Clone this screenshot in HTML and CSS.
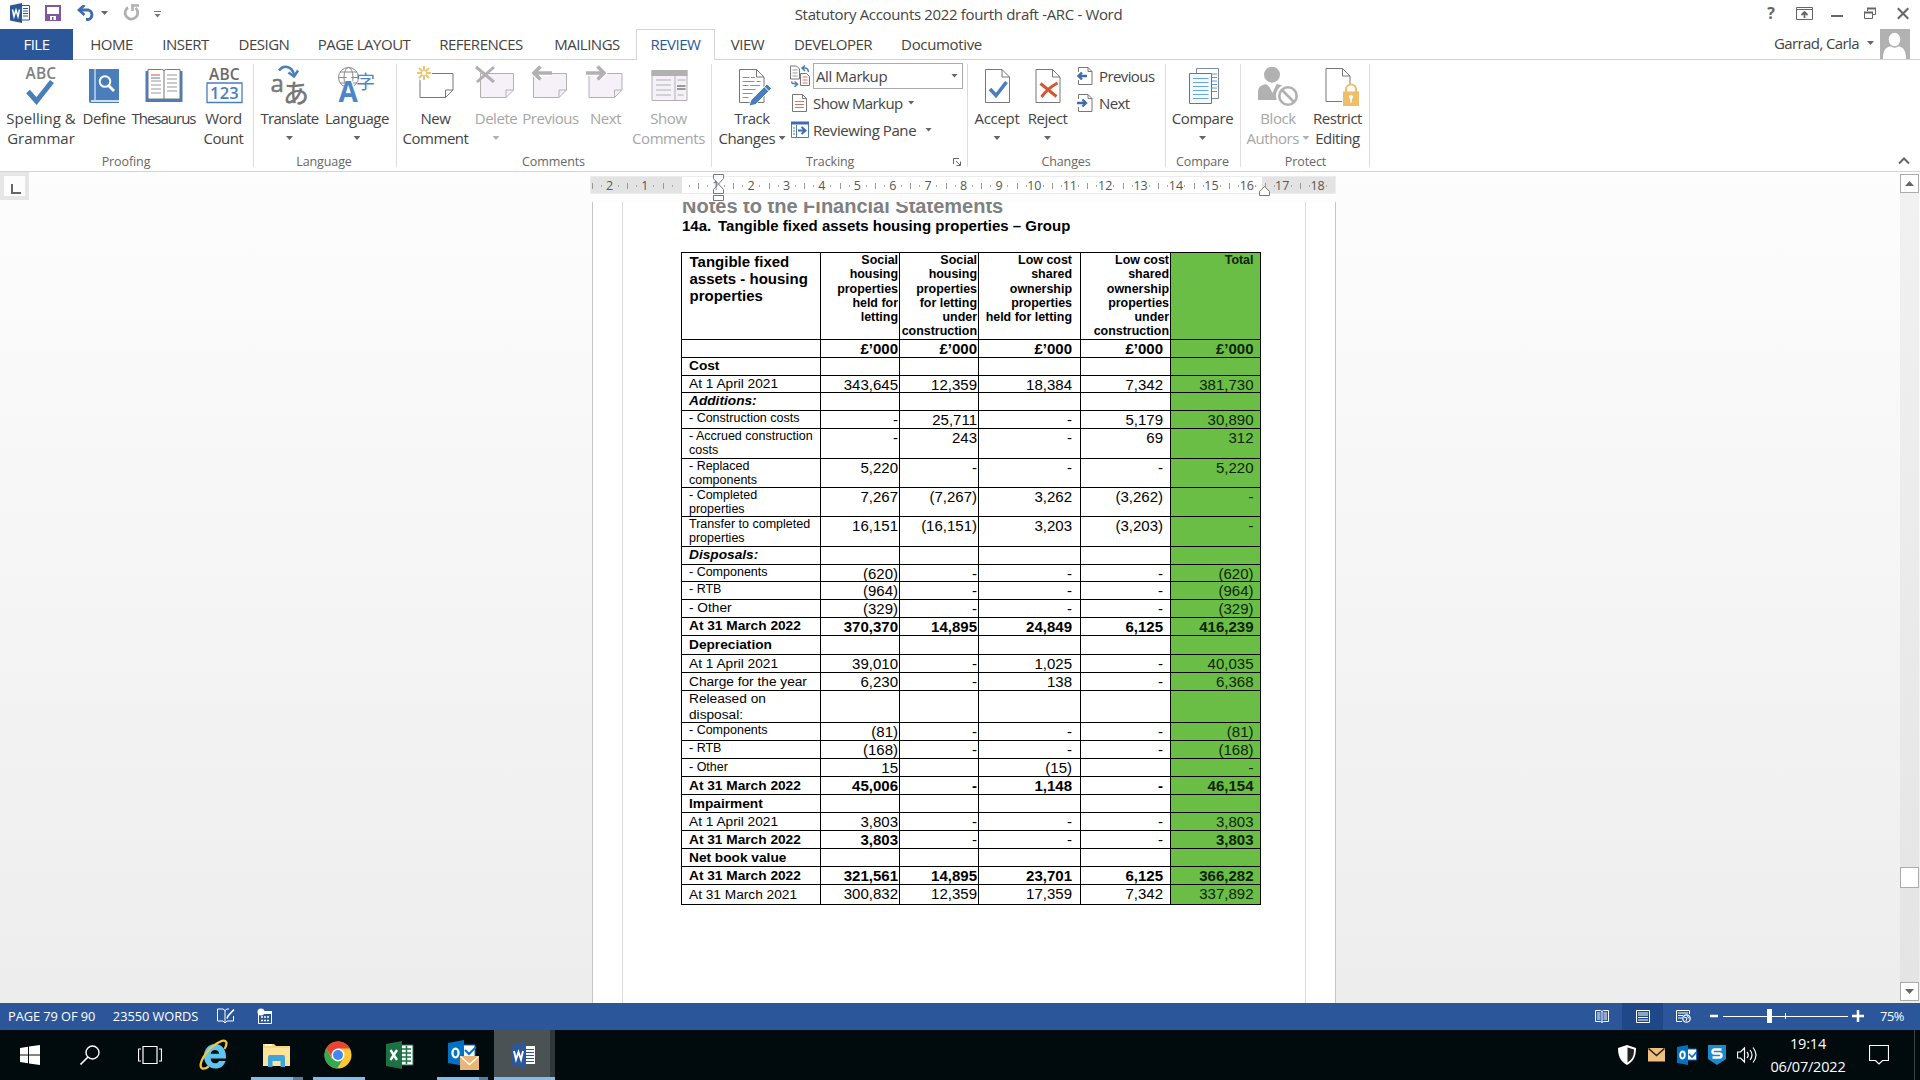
FILE: index.html
```html
<!DOCTYPE html>
<html lang="en">
<head>
<meta charset="utf-8">
<title>Statutory Accounts 2022 fourth draft -ARC - Word</title>
<link rel="stylesheet" href="styles.css">
</head>
<body>
<div class="app">
  <header class="titlebar">
    <div class="quick">
      <svg class="q-word" width="20" height="20" viewBox="0 0 20 20"><path d="M10 2.500h9.500v14.500H10" fill="#fff" stroke="#2b579a"/><path d="M13 5.500h5M13 8h5M13 10.500h5M13 13h5" stroke="#2b579a"/><path d="M0 2.500L12 0v20L0 17.500z" fill="#2b579a"/><path d="M2.500 6.500l1.500 7 2-6.500 2 6.500 1.500-7" fill="none" stroke="#fff" stroke-width="1.500"/></svg>
      <svg class="q-save" width="16" height="16" viewBox="0 0 16 16"><path d="M1 1h14v14H1z" fill="#fff" stroke="#8356a0" stroke-width="2"/><path d="M2 9h12v6H2z" fill="#8356a0"/><path d="M5 11h6v4H8.500v-3H7v3H5z" fill="#fff"/></svg>
      <svg class="q-undo" width="19" height="16" viewBox="0 0 19 16"><path d="M2 5h9.500a5 5 0 0 1 0 9.500H9" fill="none" stroke="#3f6cae" stroke-width="2.800"/><path d="M7.500 0L2 5l5.500 5" fill="none" stroke="#3f6cae" stroke-width="2.800"/></svg>
      <i class="caret q-caret"></i>
      <svg class="q-redo" width="17" height="17" viewBox="0 0 17 17"><path d="M5 3.500A6.300 6.300 0 1 0 12.500 4" fill="none" stroke="#b1b1b1" stroke-width="2.800"/><path d="M9.500 0v7M9.500 1.500H16" stroke="#b1b1b1" stroke-width="2.600" fill="none"/></svg>
      <svg class="q-more" width="7" height="7" viewBox="0 0 7 7"><path d="M0 .5h7" stroke="#777"/><path d="M.5 3h6l-3 3.500z" fill="#777"/></svg>
    </div>
    <div class="title">Statutory Accounts 2022 fourth draft -ARC - Word</div>
    <div class="winctl">
      <b class="help">?</b>
      <svg class="opts" width="17" height="13" viewBox="0 0 17 13"><path d="M.5.500h16v12H.5zM.5 2.500h16" fill="none" stroke="#666"/><path d="M8.500 11V5M5.500 8l3-3 3 3" fill="none" stroke="#666" stroke-width="1.800"/></svg>
      <svg width="12" height="13" viewBox="0 0 12 13"><path d="M0 9h12" stroke="#666" stroke-width="2"/></svg>
      <svg width="12" height="13" viewBox="0 0 12 13"><path d="M3.500 4V1.500h8v6H9" fill="none" stroke="#666"/><path d="M3 1.500h9" stroke="#666" stroke-width="2"/><path d="M.5 5.500h8v6h-8z" fill="#fff" stroke="#666"/><path d="M0 5.500h9" stroke="#666" stroke-width="2"/></svg>
      <svg width="12" height="13" viewBox="0 0 12 13"><path d="M.8 1.200l10.500 10.600M11.300 1.200L.8 11.800" stroke="#666" stroke-width="2"/></svg>
    </div>
  </header>

  <nav class="tabs">
    <a class="tab file">FILE</a><a class="tab home">HOME</a><a class="tab insert">INSERT</a><a class="tab design">DESIGN</a><a class="tab layout">PAGE LAYOUT</a><a class="tab refs">REFERENCES</a><a class="tab mail">MAILINGS</a><a class="tab review">REVIEW</a><a class="tab view">VIEW</a><a class="tab dev">DEVELOPER</a><a class="tab docu">Documotive</a>
    <div class="user"><span class="username">Garrad, Carla</span><i class="caret"></i>
      <svg width="30" height="30" viewBox="0 0 30 30"><path d="M0 0h30v30H0z" fill="#b1b1b1"/><ellipse cx="14.500" cy="10.500" rx="5.800" ry="6.800" fill="#fff"/><path d="M3 30c0-8 2-12 8-12.500q3.500 2.500 7 0c6 .5 8 4.500 8 12.500z" fill="#fff"/></svg>
    </div>
  </nav>

  <section class="ribbon">
    <div class="group g-proofing">
      <div class="tools">
        <div class="btn w78 wide"><svg class="ico" viewBox="0 0 44 44"><text x="6.500" y="16" class="abc">ABC</text><path d="M9 28.500l8.500 9.500L33 18.500" fill="none" stroke="#4a7ebb" stroke-width="5"/></svg><span>Spelling &amp;<br>Grammar</span></div>
        <div class="btn w48"><svg class="ico" viewBox="0 0 44 44"><path d="M7 6h30v34H9a2 2 0 0 1-2-2z" fill="#4a7ebb"/><path d="M13 6v31" stroke="#fff"/><path d="M9 38h28" stroke="#fff" stroke-width="1.500"/><circle cx="23" cy="18.500" r="5.300" fill="none" stroke="#fff" stroke-width="2"/><path d="M26.500 22.500l5.500 5.500" stroke="#fff" stroke-width="2.800"/></svg><span>Define</span></div>
        <div class="btn w71 tightest"><svg class="ico" viewBox="0 0 44 44"><path d="M3.500 8h37v31h-37z" fill="#4a7ebb"/><path d="M6 6.500h13.500q2.500 0 2.500 1.500 0-1.500 2.500-1.500H38v29.500H6z" fill="#fff" stroke="#777"/><path d="M22 8v30" stroke="#777"/><path d="M9 18h10M9 22h10M9 26h10M9 30h10M25 12h10M25 16h10M25 20h10M25 24h10M25 28h10" stroke="#999"/><path d="M9 12h9" stroke="#d35230"/><path d="M9 15h9" stroke="#4a7ebb"/></svg><span>Thesaurus</span></div>
        <div class="btn w49"><svg class="ico" viewBox="0 0 44 44"><text x="7" y="17" class="abc dark">ABC</text><path d="M5 20h35v19.500H5z" fill="#fff" stroke="#4a7ebb" stroke-width="1.300"/><text x="8" y="36" class="n123">123</text></svg><span>Word<br>Count</span></div>
      </div>
      <div class="gname">Proofing</div>
    </div>
    <div class="group g-language">
      <div class="tools">
        <div class="btn w69 tight"><svg class="ico" viewBox="0 0 44 44"><text x="2.500" y="28.500" class="t-a">a</text><text x="15" y="40" class="t-ja">あ</text><path d="M11 7.500C15 2 24 2 26 12" fill="none" stroke="#4a7ebb" stroke-width="2.600"/><path d="M20.500 9.500l5.500 4 4-6" fill="none" stroke="#4a7ebb" stroke-width="2.600"/></svg><span>Translate<br><i class="caret"></i></span></div>
        <div class="btn w66"><svg class="ico" viewBox="0 0 44 44"><g fill="none" stroke="#888"><circle cx="13.500" cy="14.500" r="10"/><ellipse cx="13.500" cy="14.500" rx="4.500" ry="10"/><path d="M3.500 14.500h20M5 9h17M5 20h17"/></g><path d="M3 39l9-25h4l9 25z" fill="#fff"/><text x="3.500" y="39" class="l-a">A</text><text x="21" y="26" class="l-zi">字</text></svg><span>Language<br><i class="caret"></i></span></div>
      </div>
      <div class="gname">Language</div>
    </div>
    <div class="group g-comments">
      <div class="tools">
        <div class="btn w73"><svg class="ico" viewBox="0 0 44 44"><path d="M6 10.500h33v16.500l-7.500 7.500H6zM31.500 34.500V27H39" fill="#fff" stroke="#777"/><circle cx="10" cy="10" r="8" fill="#fff"/><path d="M10 3v14M3 10h14M5 5l10 10M15 5L5 15" stroke="#eec56f" stroke-width="2"/><circle cx="10" cy="10" r="2.600" fill="#fff" stroke="#eec56f"/></svg><span>New<br>Comment</span></div>
        <div class="btn w48 off"><svg class="ico" viewBox="0 0 44 44"><path d="M6.500 10.500h33v16.500L32 34.500H6.500zM32 34.500V27h7.500" fill="#f6f1f8" stroke="#b1b1b1"/><path d="M2 4l18 15M20 4L3 19" stroke="#b1b1b1" stroke-width="3"/></svg><span>Delete<br><i class="caret"></i></span></div>
        <div class="btn w61 off"><svg class="ico" viewBox="0 0 44 44"><path d="M4.500 10.500h33v16.500L30 34.500H4.500zM30 34.500V27h7.500" fill="#f6f1f8" stroke="#b1b1b1"/><path d="M5 10h17M11.500 3.500L5 10l6.500 6.500" fill="none" stroke="#fff" stroke-width="6"/><path d="M4 10h19M11.500 3.500L5 10l6.500 6.500" fill="none" stroke="#b1b1b1" stroke-width="3.600"/></svg><span>Previous</span></div>
        <div class="btn w49 off"><svg class="ico" viewBox="0 0 44 44"><path d="M5 10.500h33v16.500l-7.500 7.500H5zM30.500 34.500V27H38" fill="#f6f1f8" stroke="#b1b1b1"/><path d="M2 10h17M13 3.500l6.500 6.500-6.500 6.500" fill="none" stroke="#fff" stroke-width="6"/><path d="M2 10h19M13.500 3.500L20 10l-6.500 6.500" fill="none" stroke="#b1b1b1" stroke-width="3.600"/></svg><span>Next</span></div>
        <div class="btn w77 off"><svg class="ico" viewBox="0 0 44 44"><path d="M5 7.500h35v30H5z" fill="#f6f1f8" stroke="#b1b1b1"/><path d="M4.500 10h36" stroke="#b1b1b1" stroke-width="6"/><path d="M28 12v26" stroke="#b1b1b1"/><path d="M9 17h15M9 22h15M9 27h15M9 32h15M30.500 17h8M30.500 32h6" stroke="#b1b1b1"/><path d="M30 23h8.500M30 26h8.500" stroke="#999" stroke-width="2"/></svg><span>Show<br>Comments</span></div>
      </div>
      <div class="gname">Comments</div>
    </div>
    <div class="group g-tracking">
      <div class="tools">
        <div class="btn w76"><svg class="ico" viewBox="0 0 44 44"><path d="M9.500 6.500h17l7.500 7.500v25.500H9.500z" fill="#fff" stroke="#777"/><path d="M26.500 6.500V14H34" fill="none" stroke="#777"/><path d="M12.500 14.500h7M21 14.500h4M12.500 18.500h12M26.500 18.500h4M12.500 22.500h6M20 22.500h10M12.500 26.500h13M12.500 30.500h10M12.500 34.500h6" stroke="#d9735a"/><path d="M19 43l2-6 16-16 4.500 4.500-16 16z" fill="#4a7ebb" stroke="#fff" stroke-width=".8"/><path d="M34 23.500l5 5" stroke="#fff"/></svg><span>Track<br>Changes&nbsp;<i class="caret up"></i></span></div>
        <div class="list l-track">
          <div class="row"><svg width="21" height="22" viewBox="0 0 21 22"><path d="M.5 1h6l3 3v10h-9z" fill="#fff" stroke="#777"/><path d="M2.500 5h5M2.500 8h5M2.500 11h5" stroke="#999"/><path d="M10.500 8.500h6l3 3v9h-9z" fill="#fff" stroke="#777"/><path d="M12.500 12h5M12.500 15h5M12.500 18h5" stroke="#d9735a"/><path d="M12 3h3q3 0 3.500 4M15 .5L12 3l3 3M1.500 16.500q0 2.500 5 2.500M4.500 16.500l3 2.500-3 3" fill="none" stroke="#4a7ebb" stroke-width="1.500"/></svg><div class="combo">All Markup<i class="caret"></i></div></div>
          <div class="row"><svg width="21" height="20" viewBox="0 0 21 20"><path d="M2.500 1.500h10l4 4v13h-14z" fill="#fff" stroke="#777"/><path d="M12.500 1.500v4h4" fill="none" stroke="#777"/><path d="M5 8.500h9M5 11.500h9M5 14.500h9" stroke="#d9735a"/></svg><span>Show Markup</span><i class="caret"></i></div>
          <div class="row"><svg width="21" height="20" viewBox="0 0 21 20"><path d="M1.500 2.500h17v15h-17z" fill="#fff" stroke="#4a7ebb"/><path d="M1 3h18" stroke="#3f6cae" stroke-width="3"/><path d="M6.500 5v12M3 8h2M3 11h2M3 14h2" stroke="#4a7ebb"/><path d="M8 10.500h7M11.500 7l4 3.500-4 3.500" fill="none" stroke="#3f6cae" stroke-width="2"/></svg><span class="rp">Reviewing Pane</span><i class="caret far"></i></div>
        </div>
      </div>
      <div class="gname">Tracking<svg class="launcher" width="8" height="8" viewBox="0 0 8 8"><path d="M.5 6V.500H6M3 3l4 4M7.500 3.500v4h-4" fill="none" stroke="#666"/></svg></div>
    </div>
    <div class="group g-changes">
      <div class="tools">
        <div class="btn w54 easy"><svg class="ico" viewBox="0 0 44 44"><path d="M10.500 6.500h16.500l7.500 7.500v25.500h-24z" fill="#fff" stroke="#777"/><path d="M27 6.500V14h7.500" fill="none" stroke="#777"/><path d="M15 26l6 6.500L31.500 19" fill="none" stroke="#4a7ebb" stroke-width="3.600"/></svg><span>Accept<br><i class="caret"></i></span></div>
        <div class="btn w47"><svg class="ico" viewBox="0 0 44 44"><path d="M10 6.500h16.500L34 14v25.500H10z" fill="#fff" stroke="#777"/><path d="M26.500 6.500V14H34" fill="none" stroke="#777"/><path d="M14.500 20.500l16 13M31.500 20Q22 25 15.500 34" fill="none" stroke="#d65532" stroke-width="3"/></svg><span>Reject<br><i class="caret"></i></span></div>
        <div class="list l-chg">
          <div class="row"><svg width="18" height="20" viewBox="0 0 18 20"><path d="M1.500 6V1.500h9.500l4 4v13H1.500V14" fill="#fff" stroke="#777"/><path d="M11 1.500v4h4" fill="none" stroke="#777"/><path d="M1 10h9M5 6.500L1.500 10 5 13.500" fill="none" stroke="#3f6cae" stroke-width="2.300"/></svg><span>Previous</span></div>
          <div class="row"><svg width="18" height="20" viewBox="0 0 18 20"><path d="M1.500 6V1.500h9.500l4 4v13H1.500V14" fill="#fff" stroke="#777"/><path d="M11 1.500v4h4" fill="none" stroke="#777"/><path d="M0 10h9M5.500 6.500L9 10l-3.500 3.500" fill="none" stroke="#3f6cae" stroke-width="2.300"/></svg><span>Next</span></div>
        </div>
      </div>
      <div class="gname">Changes</div>
    </div>
    <div class="group g-compare">
      <div class="tools">
        <div class="btn w69"><svg class="ico" viewBox="0 0 44 44"><path d="M15.500 5.500h22v30h-22z" fill="#fff" stroke="#7a8da8"/><path d="M31 11h5M31 14.500h5M31 18h5M31 21.500h5M31 25h5M31 28.500h5" stroke="#5b9bd5"/><path d="M8.500 10.500H30.500v30h-22z" fill="#f3f9fd" stroke="#57799f"/><path d="M12 15.500h15.500M12 19.500h15.500M12 23.500h15.500M12 27.500h15.500M12 31.500h15.500M12 35.500h15.500" stroke="#6aa5d8"/></svg><span>Compare<br><i class="caret"></i></span></div>
      </div>
      <div class="gname">Compare</div>
    </div>
    <div class="group g-protect">
      <div class="tools">
        <div class="btn w66 off"><svg class="ico" viewBox="0 0 44 44"><circle cx="16" cy="11.700" r="8" fill="#b1b1b1"/><path d="M2 37V29q0-7 8-8l6 5 5-5q6 1 8 4v12z" fill="#b1b1b1"/><path d="M12 21l4.500 9 4-9z" fill="#fff"/><circle cx="32" cy="33" r="12" fill="#fff"/><circle cx="32" cy="33" r="8.700" fill="#fff" stroke="#b1b1b1" stroke-width="2.600"/><path d="M26 27l12 12" stroke="#b1b1b1" stroke-width="2.600"/></svg><span>Block<br>Authors&nbsp;<i class="caret up"></i></span></div>
        <div class="btn w53"><svg class="ico" viewBox="0 0 44 44"><path d="M10 5.500h16.500L34 13v25.500H10z" fill="#fff" stroke="#777"/><path d="M26.500 5.500V13H34" fill="none" stroke="#777"/><path d="M26 44V26l4-4h9l4 4v18z" fill="#fff"/><path d="M30 29v-2.500a5 5 0 0 1 10 0V29" fill="none" stroke="#eebf6b" stroke-width="2.200"/><path d="M27 28.500h16V43H27z" fill="#eebf6b"/><circle cx="35" cy="34" r="2" fill="#fff"/><path d="M35 34v5.500" stroke="#fff" stroke-width="1.600"/></svg><span>Restrict<br>Editing</span></div>
      </div>
      <div class="gname">Protect</div>
    </div>
    <svg class="collapse" width="12" height="8" viewBox="0 0 12 8"><path d="M1 6.500l5-5 5 5" fill="none" stroke="#666" stroke-width="2"/></svg>
  </section>

  <main class="workspace">
    <div class="corner"><div class="tabstop"></div></div>
    <div class="canvas">
      <div class="ruler">
        <span>2</span><span>1</span><span></span><span>1</span><span>2</span><span>3</span><span>4</span><span>5</span><span>6</span><span>7</span><span>8</span><span>9</span><span>10</span><span>11</span><span>12</span><span>13</span><span>14</span><span>15</span><span>16</span><span>17</span><span>18</span>
        <svg class="indent" width="13" height="28" viewBox="0 0 13 28"><path d="M1.500.500h10v4l-5 5.500 5 5.500v4h-10v-4l5-5.500-5-5.500z" fill="#fff" fill-opacity=".4" stroke="#777"/><path d="M1.500 21.500h10v5h-10z" fill="#fff" stroke="#777"/></svg>
        <svg class="indent-right" width="13" height="10" viewBox="0 0 13 10"><path d="M1.500 9.500v-4l5-5 5 5v4z" fill="#fff" stroke="#777"/></svg>
      </div>
      <article class="page">
        <div class="body">
          <h1>Notes to the Financial Statements</h1>
          <h2><span>14a.</span>Tangible fixed assets housing properties – Group</h2>
          <table>
            <colgroup><col class="c1"><col class="c2"><col class="c3"><col class="c4"><col class="c5"><col class="c6"></colgroup>
            <thead>
            <tr class="h87"><th>Tangible fixed<br>assets - housing<br>properties</th><th>Social<br>housing<br>properties<br>held for<br>letting</th><th>Social<br>housing<br>properties<br>for letting<br>under<br>construction</th><th>Low cost<br>shared<br>ownership<br>properties<br>held for letting</th><th>Low cost<br>shared<br>ownership<br>properties<br>under<br>construction</th><th>Total</th></tr>
            </thead>
            <tbody>
            <tr class="b"><td></td><td>£’000</td><td>£’000</td><td>£’000</td><td>£’000</td><td>£’000</td></tr>
            <tr class="b"><td>Cost</td><td></td><td></td><td></td><td></td><td></td></tr>
            <tr class="h17"><td>At 1 April 2021</td><td>343,645</td><td>12,359</td><td>18,384</td><td>7,342</td><td>381,730</td></tr>
            <tr class="b i"><td>Additions:</td><td></td><td></td><td></td><td></td><td></td></tr>
            <tr class="s"><td>- Construction costs</td><td>-</td><td>25,711</td><td>-</td><td>5,179</td><td>30,890</td></tr>
            <tr class="s h30"><td>- Accrued construction<br>costs</td><td>-</td><td>243</td><td>-</td><td>69</td><td>312</td></tr>
            <tr class="s h29"><td>- Replaced<br>components</td><td>5,220</td><td>-</td><td>-</td><td>-</td><td>5,220</td></tr>
            <tr class="s h29"><td>- Completed<br>properties</td><td>7,267</td><td>(7,267)</td><td>3,262</td><td>(3,262)</td><td>-</td></tr>
            <tr class="s h30"><td>Transfer to completed<br>properties</td><td>16,151</td><td>(16,151)</td><td>3,203</td><td>(3,203)</td><td>-</td></tr>
            <tr class="b i"><td>Disposals:</td><td></td><td></td><td></td><td></td><td></td></tr>
            <tr class="s h17"><td>- Components</td><td>(620)</td><td>-</td><td>-</td><td>-</td><td>(620)</td></tr>
            <tr class="s"><td>- RTB</td><td>(964)</td><td>-</td><td>-</td><td>-</td><td>(964)</td></tr>
            <tr><td>- Other</td><td>(329)</td><td>-</td><td>-</td><td>-</td><td>(329)</td></tr>
            <tr class="b"><td>At 31 March 2022</td><td>370,370</td><td>14,895</td><td>24,849</td><td>6,125</td><td>416,239</td></tr>
            <tr class="b d h19"><td>Depreciation</td><td></td><td></td><td></td><td></td><td></td></tr>
            <tr class="d"><td>At 1 April 2021</td><td>39,010</td><td>-</td><td>1,025</td><td>-</td><td>40,035</td></tr>
            <tr class="d"><td>Charge for the year</td><td>6,230</td><td>-</td><td>138</td><td>-</td><td>6,368</td></tr>
            <tr class="h32"><td>Released on<br>disposal:</td><td></td><td></td><td></td><td></td><td></td></tr>
            <tr class="s"><td>- Components</td><td>(81)</td><td>-</td><td>-</td><td>-</td><td>(81)</td></tr>
            <tr class="s"><td>- RTB</td><td>(168)</td><td>-</td><td>-</td><td>-</td><td>(168)</td></tr>
            <tr class="s d"><td>- Other</td><td>15</td><td></td><td>(15)</td><td></td><td>-</td></tr>
            <tr class="b d"><td>At 31 March 2022</td><td>45,006</td><td>-</td><td>1,148</td><td>-</td><td>46,154</td></tr>
            <tr class="b d"><td>Impairment</td><td></td><td></td><td></td><td></td><td></td></tr>
            <tr class="d"><td>At 1 April 2021</td><td>3,803</td><td>-</td><td>-</td><td>-</td><td>3,803</td></tr>
            <tr class="b d"><td>At 31 March 2022</td><td>3,803</td><td class="n">-</td><td class="n">-</td><td class="n">-</td><td>3,803</td></tr>
            <tr class="b d"><td>Net book value</td><td></td><td></td><td></td><td></td><td></td></tr>
            <tr class="b d"><td>At 31 March 2022</td><td>321,561</td><td>14,895</td><td>23,701</td><td>6,125</td><td>366,282</td></tr>
            <tr class="dd h20"><td>At 31 March 2021</td><td>300,832</td><td>12,359</td><td>17,359</td><td>7,342</td><td>337,892</td></tr>
            </tbody>
          </table>
        </div>
      </article>
    </div>
    <div class="scrollbar">
      <div class="sbtn"><svg width="9" height="5" viewBox="0 0 9 5"><path d="M0 5l4.500-5L9 5z" fill="#666"/></svg></div>
      <div class="track"><div class="thumb"></div></div>
      <div class="sbtn"><svg width="9" height="5" viewBox="0 0 9 5"><path d="M0 0h9L4.500 5z" fill="#666"/></svg></div>
    </div>
  </main>

  <footer class="status">
    <span class="pages">PAGE 79 OF 90</span><span class="words">23550 WORDS</span>
    <svg class="st-proof" width="18" height="16" viewBox="0 0 18 16"><path d="M8 2.500L6 1H.5v12H6l2 2 2-2h6.500V8M8 2.500V15M8 2.500L10 1h2" fill="none" stroke="#fff"/><path d="M10 10.500l1-2.500 6-6.500" fill="none" stroke="#fff" stroke-width="1.600"/></svg>
    <svg class="st-macro" width="16" height="16" viewBox="0 0 16 16"><path d="M1.500 5.500h13v10h-13z" fill="none" stroke="#fff"/><path d="M6 3h9v3H6z" fill="#fff"/><circle cx="4" cy="4" r="3.500" fill="#fff"/><path d="M4 9h2M7 9h2M10 9h2M4 12.500h2M7 12.500h2M10 12.500h2" stroke="#fff" stroke-width="1.500"/></svg>
    <div class="views">
      <div class="vw"><svg width="14" height="13" viewBox="0 0 14 13"><path d="M7 1.500L5.500.5h-5v11h5L7 12.500l1.500-1h5V.5h-5zM7 1.500v11" fill="none" stroke="#fff"/><path d="M2 3h3.500M2 5h3.500M2 7h3.500M2 9h3.500M8.500 3H12M8.500 5H12M8.500 7H12M8.500 9H12" stroke="#fff"/></svg></div>
      <div class="vw on"><svg width="14" height="13" viewBox="0 0 14 13"><path d="M.5.500h13v12H.5z" fill="none" stroke="#fff"/><path d="M2 3h10M2 5h10M2 7.500h10M2 10h10" stroke="#fff"/></svg></div>
      <div class="vw"><svg width="15" height="13" viewBox="0 0 15 13"><path d="M13.500 4V.5H.5v11H6" fill="none" stroke="#fff"/><path d="M2 3h10M2 5.500h5M2 8h4" stroke="#fff"/><circle cx="10.500" cy="8.500" r="3.700" fill="#2b579a" stroke="#fff" stroke-width="1.200"/><path d="M8 7l3 1-1 3M11 5.500l2 3" stroke="#fff" fill="none"/></svg></div>
    </div>
    <svg class="zoomer" width="154" height="16" viewBox="0 0 154 16"><path d="M0 8h8" stroke="#fff" stroke-width="2.500"/><path d="M13 8.500h125" stroke="#fff"/><path d="M75.500 5v6" stroke="#fff"/><path d="M57 1h5v14h-5z" fill="#fff"/><path d="M142 8h12M148 2v12" stroke="#fff" stroke-width="2.500"/></svg>
    <span class="pct">75%</span>
  </footer>

  <div class="taskbar">
    <div class="apps">
      <div class="app-i start"><svg width="20" height="20" viewBox="0 0 20 20"><path d="M0 3l8-1.200v7.700H0zM9 1.600L20 0v9.500H9zM0 10.500h8v7.700L0 17zM9 10.500h11V20L9 18.400z" fill="#fff"/></svg></div>
      <div class="app-i search"><svg width="20" height="20" viewBox="0 0 20 20"><circle cx="12.500" cy="7.500" r="6.500" fill="none" stroke="#fff" stroke-width="1.400"/><path d="M8 12L.5 19.500" stroke="#fff" stroke-width="1.600"/></svg></div>
      <div class="app-i tasks"><svg width="24" height="20" viewBox="0 0 24 20"><path d="M5 1.500h14v17H5zM3 4H.5v12H3M21 4h2.500v12H21" fill="none" stroke="#fff" stroke-width="1.200"/></svg></div>
      <div class="app-i ie"><svg width="30" height="32" viewBox="0 0 30 32"><path d="M16 5C9.500 5 5 10 5 17s4.500 12.500 11.500 12.500c5 0 8.500-2.500 10-7.500h-6.500c-.8 1.500-2 2.300-3.700 2.300-3 0-4.500-1.800-4.600-4.800H27C27.500 10.500 23 5 16 5zm-4.300 9.800c.4-2.500 1.900-3.900 4.300-3.900s3.900 1.400 4.200 3.900z" fill="#5cc5f2"/><path d="M25.500 10c3.500-6 2.500-10.500-5-7C12 7 3.500 17 1.800 24.500c-1 6 3 6.500 8 3" fill="none" stroke="#f3c63a" stroke-width="2.300"/></svg></div>
      <div class="app-i run split files"><svg width="28" height="24" viewBox="0 0 28 24"><path d="M0 1h11l2 2h14v20H0z" fill="#f6d77a"/><path d="M0 5h27v18H0z" fill="#fce59a"/><path d="M2 2h7" stroke="#fff" stroke-width="1.500"/><path d="M5 24V14q0-2 2-2h13q2 0 2 2v10h-4.500v-6h-8v6z" fill="#3fa4da"/></svg></div>
      <div class="app-i run chrome"><svg width="28" height="28" viewBox="0 0 28 28"><circle cx="14" cy="14" r="13.500" fill="#fcc934"/><path d="M14 7.500h11.800A13.500 13.500 0 0 0 2.300 7.200l5.900 10z" fill="#ea4335"/><path d="M2.300 7.200A13.500 13.500 0 0 0 13 27.500l6.500-10.300-11.600.5z" fill="#34a853"/><circle cx="14" cy="14" r="6.500" fill="#fff"/><circle cx="14" cy="14" r="5" fill="#4285f4"/></svg></div>
      <div class="app-i excel"><svg width="28" height="28" viewBox="0 0 28 28"><path d="M14 4h13v20H14z" fill="#fff" stroke="#1e7145"/><path d="M16 8h9M16 12h9M16 16h9M16 20h9M20.500 5v18" stroke="#1e7145" stroke-width="1.500"/><path d="M0 3L16 0v28L0 25z" fill="#1e7145"/><path d="M4.500 9l6.500 10M11 9L4.500 19" stroke="#fff" stroke-width="2.300"/></svg></div>
      <div class="app-i run split mailapp"><svg width="32" height="32" viewBox="0 0 32 32"><path d="M15 6h12v13H15z" fill="#fff" stroke="#0072c6"/><path d="M17 11l4 4 7-7" fill="none" stroke="#0072c6" stroke-width="2"/><path d="M0 4l16-3v26L0 24z" fill="#0072c6"/><ellipse cx="7.500" cy="14" rx="3" ry="4.300" fill="none" stroke="#fff" stroke-width="2.300"/><path d="M12 17h19v14H12z" fill="#eab676"/><path d="M12.500 17.500l9 8 9-8" fill="none" stroke="#fff" stroke-width="1.400"/></svg></div>
      <div class="app-i run active"><svg width="24" height="26" viewBox="0 0 24 26"><path d="M11 4h12v18H11z" fill="#fff"/><path d="M13 7.500h9M13 10.500h9M13 13.500h9M13 16.500h9M13 19.500h9" stroke="#2b579a" stroke-width="1.200"/><path d="M0 3l14-3v26L0 23z" fill="#2b579a"/><path d="M2 9l2 8.500L6.500 10 9 17.500 11 9" fill="none" stroke="#fff" stroke-width="1.900"/></svg></div>
    </div>
    <div class="tray">
      <svg width="20" height="20" viewBox="0 0 20 20"><path d="M10 0l9 3c0 8-2 13-9 17C3 16 1 11 1 3z" fill="#fff"/><path d="M10.500 2.500l6.500 2c0 6-1.500 10-6.500 13z" fill="#222"/></svg>
      <svg width="18" height="14" viewBox="0 0 18 14"><path d="M0 0h17v13.500H0z" fill="#eec07e"/><path d="M.5.500l8 7 8-7" fill="none" stroke="#2a2018" stroke-width="1.500"/></svg>
      <svg width="20" height="20" viewBox="0 0 20 20"><path d="M10 4h9.500v11H10z" fill="#fff" stroke="#0072c6"/><path d="M12 9l3 3 4.500-5" fill="none" stroke="#0072c6" stroke-width="1.600"/><path d="M0 2l11-2v20L0 18z" fill="#0072c6"/><ellipse cx="5.500" cy="10" rx="2.300" ry="3.500" fill="none" stroke="#fff" stroke-width="1.900"/></svg>
      <svg width="18" height="20" viewBox="0 0 18 20"><path d="M0 0h18v14l-9 6-9-6z" fill="#1a8bd0"/><path d="M13.500 4.500H6.500Q4.500 4.500 4.500 6.500T6.500 8.500h5q2 0 2 2t-2 2h-7" fill="none" stroke="#fff" stroke-width="2.400"/></svg>
      <svg class="sound" width="20" height="18" viewBox="0 0 20 18"><path d="M.5 6h3l4-4v14l-4-4h-3z" fill="none" stroke="#fff" stroke-width="1.200"/><path d="M10 6q2.500 3 0 6M13 4q4 5 0 10M16 1.500q6 7.500 0 15" fill="none" stroke="#fff" stroke-width="1.200"/></svg>
      <div class="clock"><div>19:14</div><div>06/07/2022</div></div>
      <svg class="notif" width="20" height="20" viewBox="0 0 20 20"><path d="M.5.500h19v15h-6l-3.500 3.500L6.500 15.500h-6z" fill="none" stroke="#fff" stroke-width="1.200"/></svg>
      <div class="peek"></div>
    </div>
  </div>
</div>
</body>
</html>
```
FILE: styles.css
```css
* { box-sizing: border-box; }
body { margin: 0; background: #fff; color: #444; font-family: "Open Sans", "Noto Sans", sans-serif; font-size: 15px; overflow: hidden; }
svg { display: block; flex: none; }
.app { width: 1920px; height: 1080px; display: flex; flex-direction: column; }
.caret { display: inline-block; width: 7px; height: 4px; background: #666; clip-path: polygon(0 0, 100% 0, 50% 100%); flex: none; }

.titlebar { height: 29px; display: grid; grid-template-columns: 760px 397px 1fr; }
.quick { display: flex; padding-left: 10px; }
.q-word { margin-top: 3px; }
.q-save { margin: 5px 0 0 15px; }
.q-undo { margin: 5px 0 0 16px; }
.q-caret { margin: 11px 0 0 5px; }
.q-redo { margin: 4px 0 0 15px; }
.q-more { margin: 11px 0 0 14px; }
.title { text-align: center; line-height: 29px; letter-spacing: -.34px; }
.winctl { display: flex; justify-content: flex-end; padding: 7px 11px 0 0; gap: 21px; color: #666; }
.help { font-size: 16px; line-height: 13px; }
.opts { margin-right: -3px; }

.tabs { height: 31px; display: flex; border-bottom: 1px solid #d4d4d4; }
.tab { height: 30px; line-height: 31px; text-align: center; letter-spacing: -.5px; white-space: nowrap; }
.file { width: 73px; height: 31px; background: #2b579a; color: #fff; }
.home { width: 77px; }
.insert { width: 71px; }
.design { width: 86px; }
.layout { width: 114px; }
.refs { width: 120px; }
.mail { width: 92px; }
.review { width: 79px; height: 31px; margin-left: 3px; background: #fff; border: 1px solid #d4d4d4; border-bottom: 0; line-height: 29px; color: #2b579a; }
.view { width: 65px; }
.dev { width: 106px; }
.docu { width: 111px; letter-spacing: -.35px; }
.user { display: flex; align-items: center; margin-left: auto; padding-right: 10px; letter-spacing: -.6px; }
.user .caret { margin: 0 6px 2px 8px; }
.username { margin-top: -2px; }

.ribbon { height: 112px; display: flex; border-bottom: 1px solid #d4d4d4; padding-top: 4px; }
.group { height: 103px; border-right: 1px solid #dcdcdc; display: flex; flex-direction: column; }
.g-proofing { width: 254px; padding-left: 2px; }
.g-language { width: 143px; padding-left: 1px; }
.g-comments { width: 315px; padding-left: 2px; }
.g-tracking { width: 256px; padding-left: 2px; }
.g-changes { width: 198px; padding-left: 2px; }
.g-compare { width: 75px; padding-left: 2px; }
.g-protect { width: 129px; padding-left: 4px; }
.tools { display: flex; flex: none; height: 90px; margin-top: -1px; }
.gname { font-size: 12.500px; line-height: 18px; flex: none; padding-right: 3px; text-align: center; color: #666; letter-spacing: -.1px; display: flex; justify-content: center; }
.g-tracking .gname { padding-left: 92px; justify-content: flex-start; }
.launcher { margin: 5px 3px 0 auto; }
.btn { display: flex; flex-direction: column; align-items: center; text-align: center; line-height: 20px; white-space: nowrap; letter-spacing: -.45px; }
.btn span { margin-top: 1px; }
.btn .caret { margin-bottom: 4px; }
.wide { letter-spacing: 0; }
.easy { letter-spacing: -.3px; }
.tight { letter-spacing: -.8px; }
.tightest { letter-spacing: -1px; }
.ico { width: 44px; height: 44px; overflow: visible; }
.off { color: #a6a6a6; }
.off .caret { background: #b1b1b1; }
.w47 { width: 47px; } .w48 { width: 48px; } .w49 { width: 49px; } .w53 { width: 53px; } .w54 { width: 54px; }
.w61 { width: 61px; } .w66 { width: 66px; } .w69 { width: 69px; } .w71 { width: 71px; } .w73 { width: 73px; }
.w76 { width: 76px; } .w77 { width: 77px; } .w78 { width: 78px; }
.abc { font: 600 15.500px "Open Sans", sans-serif; fill: #808080; letter-spacing: .2px; }
.dark { fill: #6a6a6a; }
.n123 { font: 600 16.500px "Open Sans", sans-serif; fill: #4a7ebb; letter-spacing: .2px; }
.t-a { font: 24px "Open Sans", sans-serif; fill: #777; stroke: #777; stroke-width: .5; }
.t-ja { font: 500 26px "Noto Sans CJK JP", sans-serif; fill: #777; }
.l-a { font: 700 28px "Open Sans", sans-serif; fill: #4a86c8; }
.l-zi { font: 19px "Noto Sans CJK JP", sans-serif; fill: #4a86c8; }
.list { display: flex; flex-direction: column; letter-spacing: -.6px; margin-top: -1px; }
.row { display: flex; align-items: center; height: 27px; }
.l-track .row > svg { margin-right: 2px; }
.l-track .caret { margin-left: 5px; }
.l-track .far { margin-left: 9px; }
.rp { letter-spacing: -.42px; }
.combo { width: 150px; height: 26px; border: 1px solid #ababab; display: flex; align-items: center; justify-content: space-between; padding: 0 4px 0 2px; letter-spacing: -.4px; }
.l-chg { padding-left: 6px; }
.l-chg .row > svg { margin-right: 4px; }
.collapse { margin: 93px 10px 0 auto; }

.workspace { height: 831px; display: grid; grid-template-columns: 590px 1fr 20px; background: linear-gradient(#fdfdfd, #ededed); }
.corner { width: 29px; height: 28px; background: #e6e6e6; padding: 4px; }
.tabstop { width: 21px; height: 20px; background: #fdfdfd; position: relative; }
.tabstop::after { content: ""; position: absolute; left: 7px; top: 8px; width: 8px; height: 8px; border: solid #666; border-width: 0 0 2px 2px; }
.canvas { display: flex; flex-direction: column; align-items: flex-start; height: 831px; overflow: hidden; }
.ruler { margin-top: 4px; width: 746px; height: 18px; padding-left: 1.800px; display: flex; background: linear-gradient(90deg, #e3e3e3 92px, #fff 92px, #fff 672px, #e3e3e3 672px); font-size: 12.500px; color: #555; position: relative; outline: 1px solid #ececec; outline-offset: -1px; }
.ruler span { width: 35.420px; line-height: 19px; text-align: center; background: linear-gradient(#999, #999) 0 7px / 1px 6px no-repeat, linear-gradient(#aaa, #aaa) 9px 9px / 1px 2px no-repeat, linear-gradient(#aaa, #aaa) 26px 9px / 1px 2px no-repeat; }
.indent { position: absolute; left: 122px; top: -2px; }
.indent-right { position: absolute; left: 668px; top: 10px; }
.page { margin: 8px 0 0 2px; width: 744px; height: 801px; background: #fff; border: solid #c6c6c6; border-width: 0 1px; padding: 0 29px; display: flex; overflow: hidden; }
.body { width: 684px; border: solid #dadada; border-width: 0 1px; padding-left: 58px; font-family: "Liberation Sans", Arial, sans-serif; color: #000; }
h1 { margin: -8px 0 0 1px; font-size: 20px; line-height: 24px; color: #808080; white-space: nowrap; }
h2 { margin: -2px 0 0 1px; font-size: 15px; line-height: 20px; height: 36px; white-space: nowrap; display: flex; }
h2 span { width: 36px; }
table { width: 580px; table-layout: fixed; border-collapse: separate; border-spacing: 0; border: solid #000; border-width: 1px 0 0 1px; }
.c1 { width: 139px; } .c2, .c3 { width: 79px; } .c4 { width: 102px; } .c5, .c6 { width: 90px; }
td, th { height: 18px; padding: 2px 1px 0 0; border: solid #000; border-width: 0 1px 1px 0; font-size: 15px; line-height: 14px; text-align: right; vertical-align: top; font-weight: 400; white-space: nowrap; }
th { font-weight: 700; font-size: 12.450px; line-height: 14.300px; padding-top: 0; }
th:first-child { font-size: 15px; line-height: 17px; text-align: left; padding: 0 0 0 7.500px; }
td:first-child { font-size: 13.700px; line-height: 15px; text-align: left; padding: 0 0 0 7px; }
td:nth-child(3), th:nth-child(3) { padding-right: 1px; }
td:nth-child(4), th:nth-child(4) { padding-right: 8px; }
td:nth-child(5) { padding-right: 7px; }
td:nth-child(6), th:nth-child(6) { padding-right: 6.500px; }
th:nth-child(5) { padding-right: 1px; }
td:last-child, th:last-child { background: #6abd45; color: #10240a; }
.b td { font-weight: 700; }
.b td.n { font-weight: 400; }
.i td { font-style: italic; }
.s td:first-child { font-size: 12.500px; line-height: 14px; }
.d td:first-child { padding-top: 1px; }
.dd td:first-child { padding-top: 2px; }
.h87 th { height: 87px; } .h17 td { height: 17px; } .h19 td { height: 19px; } .h20 td { height: 20px; }
.h29 td { height: 29px; } .h30 td { height: 30px; } .h32 td { height: 32px; line-height: 15.500px; }
.scrollbar { display: flex; flex-direction: column; padding: 2px 1px 2px 0; }
.sbtn { height: 19px; border: 1px solid #ababab; background: #fff; display: flex; align-items: center; justify-content: center; }
.track { flex: 1; background: linear-gradient(#f1f1f1, #e4e4e4); }
.thumb { margin-top: 674px; height: 21px; background: #fff; border: 1px solid #ababab; }

.status { height: 27px; background: #2b579a; color: #fff; display: flex; align-items: center; padding: 0 0 1px 8px; font-size: 12.800px; letter-spacing: -.05px; }
.words { margin-left: 17.500px; }
.st-proof { margin-left: 19px; }
.st-macro { margin-left: 22px; }
.views { margin-left: auto; display: flex; height: 27px; margin-bottom: -1px; }
.vw { width: 41px; display: flex; align-items: center; justify-content: center; padding-bottom: 1px; }
.on { background: #1e4888; }
.zoomer { margin-left: 6px; }
.pct { margin: 0 16px 0 16px; width: 24px; letter-spacing: -.4px; }

.taskbar { height: 50px; background: #010a0c; display: flex; justify-content: space-between; color: #fff; }
.apps { display: flex; padding-left: 4px; }
.app-i { width: 51.500px; margin-right: 10.300px; height: 50px; display: flex; align-items: center; justify-content: center; }
.search { margin-left: -1.500px; }
.tasks { margin-left: -1.800px; }
.ie { margin-left: 1.900px; }
.files { margin-left: 1.700px; }
.run { border-bottom: 3px solid #83bce8; padding-top: 3px; }
.split { border-image: linear-gradient(90deg, #83bce8 78%, #567f9f 78%) 3; border-width: 0 0 3px; border-style: solid; }
.chrome, .excel, .active { padding-right: 2px; }
.mailapp { padding-left: 2px; }
.app-i.active { width: 61px; margin-left: -4.400px; background: linear-gradient(90deg, #4b5253 56px, #303738 56px); }
.tray { display: flex; align-items: center; }
.tray svg { margin-right: 11px; }
.tray .sound { margin-right: 9px; }
.clock { width: 84px; text-align: center; font-size: 14.500px; line-height: 23px; letter-spacing: -.2px; }
.tray .notif { margin: 0 25px 0 19px; }
.peek { width: 1px; height: 50px; background: #3c4445; margin-right: 5px; }
```
